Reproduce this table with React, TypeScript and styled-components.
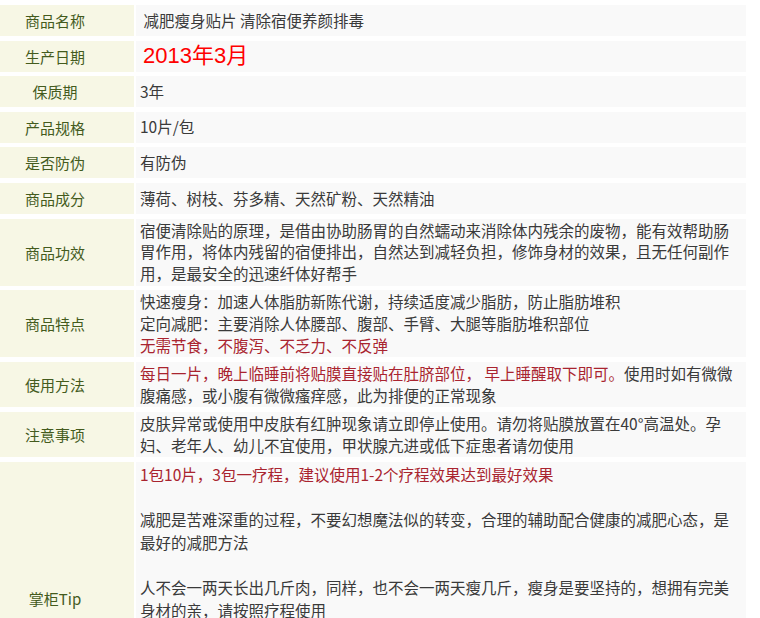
import React from "react";
import styled, { createGlobalStyle } from "styled-components";

const GlobalStyle = createGlobalStyle`
  html, body {
    margin: 0;
    padding: 0;
    background: #ffffff;
  }
  body {
    font-family: "Noto Sans CJK SC", "Liberation Sans", sans-serif;
  }
`;

const Page = styled.div`
  width: 760px;
  padding-top: 5px;
`;

const Table = styled.div`
  display: grid;
  grid-template-columns: 134px 610px;
  column-gap: 2px;
  row-gap: 4.6px;
  width: 746px;
`;

const Label = styled.div`
  background: #f7f7e5;
  color: #445b1d;
  font-size: 15px;
  display: flex;
  align-items: center;
  justify-content: center;
  padding-right: 24px;
  min-height: 31px;
  box-sizing: border-box;
`;

const Value = styled.div<{ $lh?: number; $minH?: number; $top?: boolean; $pt?: number }>`
  background: #f9f9f9;
  color: #3a3a3a;
  font-size: 15.5px;
  line-height: ${(p) => p.$lh ?? 21.7}px;
  padding: ${(p) => p.$pt ?? 1}px 6px 1px 4px;
  min-height: ${(p) => p.$minH ?? 31}px;
  box-sizing: border-box;
  display: flex;
  flex-direction: column;
  justify-content: ${(p) => (p.$top ? "flex-start" : "center")};
`;

const Line = styled.div``;

const Blank = styled.div<{ $h: number }>`
  height: ${(p) => p.$h}px;
`;

const Red = styled.span`
  color: #a9242f;
`;

const BigDate = styled.span`
  color: #ff0000;
  font-family: "Liberation Sans", "Noto Sans CJK SC", sans-serif;
  font-size: 22px;
  line-height: 28px;
  padding-left: 3px;
`;

type Row = {
  label: string;
  content: React.ReactNode;
  lh?: number;
  minH?: number;
  top?: boolean;
  pt?: number;
};

const rows: Row[] = [
  { label: "商品名称", content: <Line>&nbsp;减肥瘦身贴片 清除宿便养颜排毒</Line> },
  { label: "生产日期", content: <Line><BigDate>2013年3月</BigDate></Line> },
  { label: "保质期", content: <Line>3年</Line> },
  { label: "产品规格", content: <Line>10片/包</Line> },
  { label: "是否防伪", content: <Line>有防伪</Line> },
  { label: "商品成分", content: <Line>薄荷、树枝、芬多精、天然矿粉、天然精油</Line> },
  {
    label: "商品功效",
    content: (
      <Line>
        宿便清除贴的原理，是借由协助肠胃的自然蠕动来消除体内残余的废物，能有效帮助肠胃作用，将体内残留的宿便排出，自然达到减轻负担，修饰身材的效果，且无任何副作用，是最安全的迅速纤体好帮手
      </Line>
    ),
  },
  {
    label: "商品特点",
    content: (
      <>
        <Line>快速瘦身：加速人体脂肪新陈代谢，持续适度减少脂肪，防止脂肪堆积</Line>
        <Line>定向减肥：主要消除人体腰部、腹部、手臂、大腿等脂肪堆积部位</Line>
        <Line>
          <Red>无需节食，不腹泻、不乏力、不反弹</Red>
        </Line>
      </>
    ),
  },
  {
    label: "使用方法",
    content: (
      <Line>
        <Red>每日一片，晚上临睡前将贴膜直接贴在肚脐部位， 早上睡醒取下即可。</Red>
        使用时如有微微腹痛感，或小腹有微微瘙痒感，此为排便的正常现象
      </Line>
    ),
  },
  {
    label: "注意事项",
    content: (
      <Line>
        皮肤异常或使用中皮肤有红肿现象请立即停止使用。请勿将贴膜放置在40°高温处。孕妇、老年人、幼儿不宜使用，甲状腺亢进或低下症患者请勿使用
      </Line>
    ),
  },
  {
    label: "掌柜Tip",
    lh: 22.7,
    minH: 274,
    top: true,
    pt: 1,
    content: (
      <>
        <Line>
          <Red>1包10片，3包一疗程，建议使用1-2个疗程效果达到最好效果</Red>
        </Line>
        <Blank $h={22.7} />
        <Line>减肥是苦难深重的过程，不要幻想魔法似的转变，合理的辅助配合健康的减肥心态，是最好的减肥方法</Line>
        <Blank $h={22.7} />
        <Line>人不会一两天长出几斤肉，同样，也不会一两天瘦几斤，瘦身是要坚持的，想拥有完美身材的亲，请按照疗程使用</Line>
      </>
    ),
  },
];

export default function App() {
  return (
    <>
      <GlobalStyle />
      <Page>
        <Table>
          {rows.map((r) => (
            <React.Fragment key={r.label}>
              <Label>{r.label}</Label>
              <Value $lh={r.lh} $minH={r.minH} $top={r.top} $pt={r.pt}>
                {r.content}
              </Value>
            </React.Fragment>
          ))}
        </Table>
      </Page>
    </>
  );
}
